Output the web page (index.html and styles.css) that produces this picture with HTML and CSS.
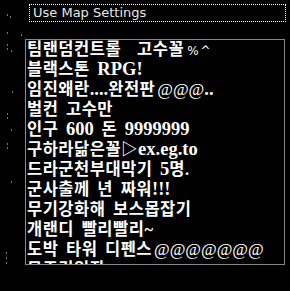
FILE: index.html
```html
<!DOCTYPE html>
<html>
<head>
<meta charset="utf-8">
<link rel="stylesheet" href="styles.css">
</head>
<body>
<div class="screen">
  <div class="settings">Use Map Settings</div>
  <div class="maplist">
    <div class="row">팀랜덤컨트롤<span class="gap"></span>고수꼴<span class="small">%^</span></div>
    <div class="row">블랙스톤 <span class="l">RPG!</span></div>
    <div class="row">임진왜란<span class="l">....</span>완전판<span class="at">@@@</span><span class="l">..</span></div>
    <div class="row">벌컨 고수만</div>
    <div class="row">인구 <span class="l">600</span> 돈 <span class="l">9999999</span></div>
    <div class="row">구하라닮은꼴▷<span class="l">ex.eg.to</span></div>
    <div class="row">드라군천부대막기 <span class="l">5</span>명.</div>
    <div class="row">군사출께 년 짜워<span class="l">!!!</span></div>
    <div class="row">무기강화해 보스몹잡기</div>
    <div class="row">개랜디 빨리빨리~</div>
    <div class="row">도박 타워 디펜스<span class="at">@@@@@@@</span></div>
    <div class="row">무조건입장 !!</div>
  </div>
  <span class="dot" style="left:7px;top:14px"></span>
  <span class="dot" style="left:10px;top:16px"></span>
  <span class="dot" style="left:7px;top:32px"></span>
  <span class="dot" style="left:21px;top:34px"></span>
  <span class="dot" style="left:7px;top:44px"></span>
  <span class="dot" style="left:7px;top:48px"></span>
  <span class="dot" style="left:11px;top:50px"></span>
  <span class="dot" style="left:12px;top:91px"></span>
  <span class="dot" style="left:7px;top:113px"></span>
  <span class="dot" style="left:7px;top:117px"></span>
  <span class="dot" style="left:11px;top:129px"></span>
  <span class="dot" style="left:7px;top:143px"></span>
  <span class="dot" style="left:7px;top:147px"></span>
  <span class="dot" style="left:11px;top:181px"></span>
  <span class="dot" style="left:6px;top:252px"></span>
  <span class="dot" style="left:6px;top:257px"></span>
  <span class="dot" style="left:6px;top:262px"></span>
</div>
</body>
</html>
```
FILE: styles.css
```css
html, body {
  margin: 0;
  padding: 0;
  background: #000;
}
.screen {
  position: relative;
  width: 290px;
  height: 291px;
  overflow: hidden;
  background: #000;
}
.settings {
  margin: 4px 0 0 29px;
  width: 252px;
  height: 16px;
  border: 1px dotted #fff;
  color: #e8e8e8;
  font-family: "DejaVu Sans", sans-serif;
  font-size: 13px;
  line-height: 16px;
  padding-left: 3px;
  box-sizing: content-box;
}
.maplist {
  margin: 17px 0 0 25px;
  width: 257px;
  height: 224px;
  border: 1px solid #888;
  overflow: hidden;
  padding-left: 1px;
  box-sizing: content-box;
}
.row {
  color: #fff;
  font-family: "Liberation Serif", "Noto Sans CJK KR", serif;
  font-size: 16.5px;
  font-weight: bold;
  letter-spacing: 0.5px;
  word-spacing: 3px;
  line-height: 20px;
  height: 20px;
  white-space: nowrap;
}
.gap {
  display: inline-block;
  width: 16px;
}
.l {
  font-size: 18.5px;
  line-height: 18px;
  letter-spacing: 0;
}
.small {
  font-family: "DejaVu Sans", sans-serif;
  font-size: 12px;
  font-weight: normal;
  letter-spacing: 2px;
  margin-left: 3px;
}
.at {
  font-family: "Liberation Serif", serif;
  font-size: 17px;
  line-height: 17px;
  font-weight: normal;
  letter-spacing: 0;
  margin-left: 2px;
}
.dot {
  position: absolute;
  width: 1px;
  height: 2px;
  background: #777;
}
```
